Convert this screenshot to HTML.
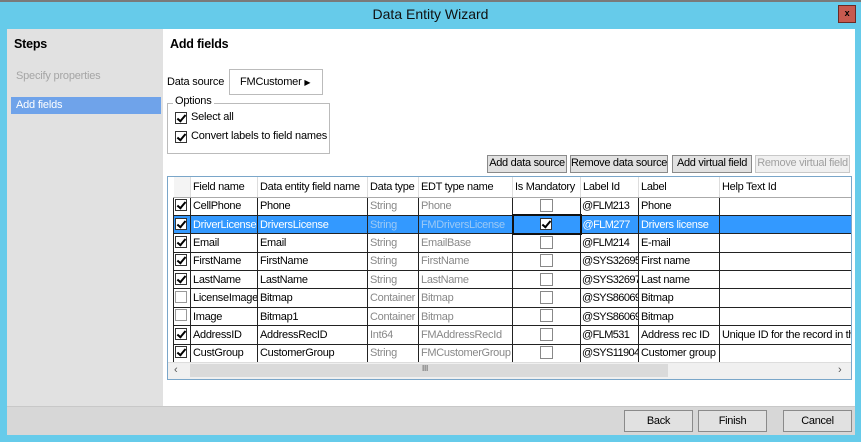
<!DOCTYPE html>
<html><head><style>
*{margin:0;padding:0;box-sizing:border-box}
body{width:861px;height:442px;background:#66cbea;font-family:"Liberation Sans",sans-serif;font-size:11px;letter-spacing:-0.2px;color:#000;position:relative;overflow:hidden}
.a{position:absolute}
.btn{position:absolute;background:#e1e1e1;border:1px solid #8a8a8a;text-align:center;line-height:15px;font-size:11px;letter-spacing:-0.3px;white-space:nowrap;overflow:hidden}
.cb{position:absolute;width:12px;height:12px;border:1px solid #333;background:#fff}
.cb.k::after{content:"";position:absolute;left:3px;top:0px;width:3px;height:7px;border:solid #000;border-width:0 2px 2px 0;transform:rotate(40deg)}
.mb{position:absolute;width:13px;height:13px;border:1px solid #888;background:#fff}
table{border-collapse:collapse;table-layout:fixed}
td{border:1px solid #222;height:18.4px;padding:0 2px;white-space:nowrap;overflow:hidden;font-size:11px;letter-spacing:-0.3px}
td.l{letter-spacing:-0.6px;padding:0 1px}
.g{color:#888}
tr.sel td{background:#3399ff;color:#fff}
tr.sel td.g{color:#9cc9f5}
th{font-weight:normal;text-align:left;padding:0 2px;height:20px;border-right:1px solid #ddd;border-bottom:1px solid #aaa;background:#fff;white-space:nowrap;overflow:hidden;font-size:11px;letter-spacing:-0.3px}
</style></head><body>
<div class="a" style="left:0;top:0;width:861px;height:2px;background:#7a7a7a"></div>
<div class="a" style="left:0;top:6px;width:861px;text-align:center;font-size:14px;letter-spacing:0;color:#111">Data Entity Wizard</div>
<div class="a" style="left:838px;top:5px;width:18px;height:18px;background:#c75a4f;border:1px solid #6b2a25;color:#000;font-size:9px;text-align:center;line-height:15px;font-weight:bold">x</div>
<div class="a" style="left:7px;top:29px;width:156px;height:377px;background:#e1e1e1"></div>
<div class="a" style="left:14px;top:37px;font-weight:bold;font-size:12.5px">Steps</div>
<div class="a" style="left:16px;top:70px;color:#a5a5a5">Specify properties</div>
<div class="a" style="left:11px;top:97px;width:150px;height:17px;background:#6fa3ea;color:#fff;padding:2px 0 0 5px">Add fields</div>
<div class="a" style="left:163px;top:29px;width:692px;height:377px;background:#fff"></div>
<div class="a" style="left:7px;top:406px;width:848px;height:29px;background:#d7d7d7;border-top:1px solid #c8c8c8"></div>
<div class="a" style="left:170px;top:37px;font-weight:bold;font-size:12.5px">Add fields</div>
<div class="a" style="left:167px;top:76px">Data source</div>
<div class="a" style="left:229px;top:69px;width:94px;height:26px;border:1px solid #bbb;padding:6px 0 0 10px">FMCustomer <span style="font-size:8px">&#9654;</span></div>
<div class="a" style="left:167px;top:103px;width:163px;height:51px;border:1px solid #bbb"></div>
<div class="a" style="left:173px;top:95px;background:#fff;padding:0 2px">Options</div>
<div class="cb k" style="left:175px;top:112px"></div><div class="a" style="left:191px;top:111px">Select all</div>
<div class="cb k" style="left:175px;top:131px"></div><div class="a" style="left:191px;top:130px">Convert labels to field names</div>
<div class="btn" style="left:487px;top:155px;width:80px;height:18px">Add data source</div>
<div class="btn" style="left:570px;top:155px;width:98px;height:18px">Remove data source</div>
<div class="btn" style="left:672px;top:155px;width:80px;height:18px">Add virtual field</div>
<div class="btn" style="left:755px;top:155px;width:95px;height:18px;color:#a0a0a0;border-color:#c8c8c8;background:#f0f0f0">Remove virtual field</div>
<div class="a" style="left:167px;top:176px;width:685px;height:204px;border:1px solid #7aa6c9;overflow:hidden;background:#fff">
<table style="width:700px;position:absolute;left:5px;top:0">
<colgroup><col style="width:17px"><col style="width:67px"><col style="width:110px"><col style="width:51px"><col style="width:94px"><col style="width:68px"><col style="width:58px"><col style="width:81px"><col style="width:154px"></colgroup>
<tr><th style="background:#f4f4f4"></th><th>Field name</th><th>Data entity field name</th><th>Data type</th><th>EDT type name</th><th>Is Mandatory</th><th>Label Id</th><th>Label</th><th>Help Text Id</th></tr>
<tr><td></td><td>CellPhone</td><td>Phone</td><td class="g">String</td><td class="g">Phone</td><td></td><td class="l">@FLM213</td><td>Phone</td><td></td></tr>
<tr class="sel"><td></td><td>DriverLicense</td><td>DriversLicense</td><td class="g">String</td><td class="g">FMDriversLicense</td><td style="border:2px solid #111"></td><td class="l">@FLM277</td><td>Drivers license</td><td></td></tr>
<tr><td></td><td>Email</td><td>Email</td><td class="g">String</td><td class="g">EmailBase</td><td></td><td class="l">@FLM214</td><td>E-mail</td><td></td></tr>
<tr><td></td><td>FirstName</td><td>FirstName</td><td class="g">String</td><td class="g">FirstName</td><td></td><td class="l">@SYS32695</td><td>First name</td><td></td></tr>
<tr><td></td><td>LastName</td><td>LastName</td><td class="g">String</td><td class="g">LastName</td><td></td><td class="l">@SYS32697</td><td>Last name</td><td></td></tr>
<tr><td></td><td>LicenseImage</td><td>Bitmap</td><td class="g">Container</td><td class="g">Bitmap</td><td></td><td class="l">@SYS86069</td><td>Bitmap</td><td></td></tr>
<tr><td></td><td>Image</td><td>Bitmap1</td><td class="g">Container</td><td class="g">Bitmap</td><td></td><td class="l">@SYS86069</td><td>Bitmap</td><td></td></tr>
<tr><td></td><td>AddressID</td><td>AddressRecID</td><td class="g">Int64</td><td class="g">FMAddressRecId</td><td></td><td class="l">@FLM531</td><td>Address rec ID</td><td>Unique ID for the record in the</td></tr>
<tr><td></td><td>CustGroup</td><td>CustomerGroup</td><td class="g">String</td><td class="g">FMCustomerGroup</td><td></td><td class="l">@SYS11904</td><td>Customer group</td><td></td></tr>
</table>
<div class="a" style="left:0;top:185px;width:683px;height:17px;background:#f0f0f0;border-top:1px solid #ddd"></div>
<div class="a" style="left:6px;top:187px;color:#555">&lsaquo;</div>
<div class="a" style="left:22px;top:187px;width:478px;height:13px;background:#dadada"></div>
<div class="a" style="left:254px;top:187px;font-size:8px;color:#555">III</div>
<div class="a" style="left:670px;top:187px;color:#555">&rsaquo;</div>
</div>
<div class="cb k" style="left:175px;top:199px"></div>
<div class="cb k" style="left:175px;top:218px"></div>
<div class="cb k" style="left:175px;top:236px"></div>
<div class="cb k" style="left:175px;top:254px"></div>
<div class="cb k" style="left:175px;top:273px"></div>
<div class="cb" style="left:175px;top:291px;border-color:#999"></div>
<div class="cb" style="left:175px;top:309px;border-color:#999"></div>
<div class="cb k" style="left:175px;top:328px"></div>
<div class="cb k" style="left:175px;top:346px"></div>
<div class="mb" style="left:540px;top:199px"></div>
<div class="cb k" style="left:540px;top:218px"></div>
<div class="mb" style="left:540px;top:236px"></div>
<div class="mb" style="left:540px;top:254px"></div>
<div class="mb" style="left:540px;top:273px"></div>
<div class="mb" style="left:540px;top:291px"></div>
<div class="mb" style="left:540px;top:309px"></div>
<div class="mb" style="left:540px;top:328px"></div>
<div class="mb" style="left:540px;top:346px"></div>
<div class="btn" style="left:624px;top:410px;width:69px;height:22px;line-height:20px">Back</div>
<div class="btn" style="left:698px;top:410px;width:69px;height:22px;line-height:20px">Finish</div>
<div class="btn" style="left:783px;top:410px;width:69px;height:22px;line-height:20px">Cancel</div>
</body></html>
